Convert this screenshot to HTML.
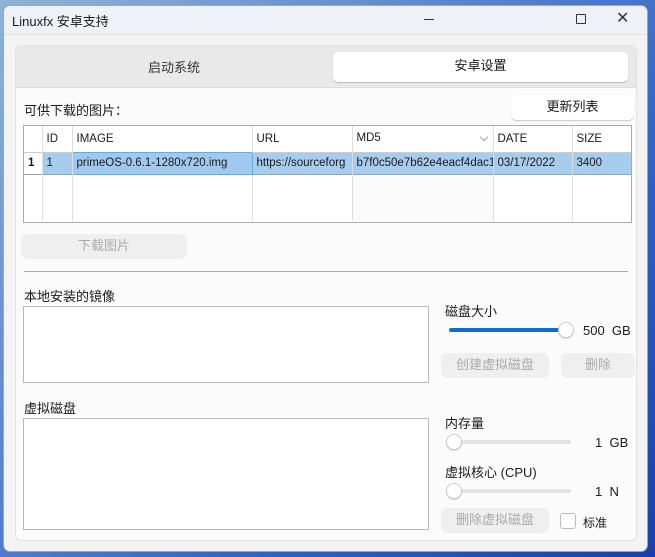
<!DOCTYPE html>
<html><head><meta charset="utf-8"><style>
*{box-sizing:border-box;margin:0;padding:0}
body{width:655px;height:557px;overflow:hidden;background:linear-gradient(135deg,#8fb3d6,#2d5fc4 70%,#1a3fa8);font-family:"Liberation Sans","Noto Sans CJK SC",sans-serif;font-size:12px;color:#1a1a1a;position:relative}
.a{position:absolute}
.win{left:3px;top:5px;width:645px;height:547px;background:#f3f3f3;border:1px solid #9aa8b8;border-radius:7px;overflow:hidden}
.tb{left:0;top:0;width:100%;height:29px;background:#eef2f7;border-bottom:1px solid #dfe3e8}
.panel{left:11px;top:39px;width:622px;height:496px;background:#fbfbfb;border:1px solid #e2e2e2;border-radius:6px;overflow:hidden}
.tabs{left:0;top:0;width:100%;height:42px;background:#e9e9e9;border-bottom:1px solid #ddd}
.btn{background:#fff;border-radius:5px;box-shadow:0 1px 1px rgba(0,0,0,.2);text-align:center}
.dis{background:#efefef;border-radius:6px;color:#aaa;text-align:center}
.box{background:#fff;border:1px solid #b8b8b8}
.track{height:4px;background:#e3e3e3;border-radius:2px}
.thumb{width:16px;height:16px;border-radius:50%;background:#fff;border:1px solid #ccc;box-shadow:0 1px 1px rgba(0,0,0,.15)}
td{border-right:1px solid #ddd;padding:0 4px;white-space:nowrap;overflow:hidden;font-size:11.5px}
table{border-collapse:collapse;table-layout:fixed}
.lb{font-size:13px;line-height:16px}
</style></head><body>
<div class="a win">
 <div class="a tb"></div>
 <div class="a" style="left:8px;top:5px;font-size:13px">Linuxfx 安卓支持</div>
 <div class="a" style="left:420px;top:13px;width:10px;height:1px;background:#333"></div>
 <div class="a" style="left:572px;top:8px;width:10px;height:10px;border:1px solid #333;border-radius:1px"></div>
 <div class="a" style="left:612px;top:2px;font-size:16px;color:#333">✕</div>
 <div class="a panel">
  <div class="a tabs"></div>
  <div class="a" style="left:132px;top:11px;font-size:13px;color:#333">启动系统</div>
  <div class="a btn" style="left:317px;top:6px;width:295px;height:30px;line-height:28px;font-size:13px">安卓设置</div>
  <div class="a" style="left:0;top:-7px;width:622px;height:500px">
  <div class="a lb" style="left:8px;top:64px">可供下载的图片：</div>
  <div class="a btn" style="left:495px;top:56px;width:123px;height:25px;line-height:23px;font-size:13px">更新列表</div>
  <div class="a box" style="left:7px;top:86px;width:609px;height:98px;border-color:#aaa">
   <table style="width:607px">
    <colgroup><col style="width:18px"><col style="width:30px"><col style="width:180px"><col style="width:100px"><col style="width:141px"><col style="width:79px"><col style="width:59px"></colgroup>
    <tr style="height:26px;border-bottom:1px solid #ccc"><td></td><td>ID</td><td>IMAGE</td><td>URL</td><td>MD5<span style="float:right;color:#555">⌵</span></td><td>DATE</td><td style="border:none">SIZE</td></tr>
    <tr style="height:22px;background:#a7cdee;border-bottom:1px solid #8ab"><td style="background:#fff;font-weight:bold">1</td><td>1</td><td style="border:1px solid #6aa8e0;background:#9fc9ee">primeOS-0.6.1-1280x720.img</td><td>https://sourceforg</td><td>b7f0c50e7b62e4eacf4dac1</td><td>03/17/2022</td><td style="border:none">3400</td></tr>
    <tr style="height:47px"><td></td><td></td><td></td><td></td><td style="background:#fafafa"></td><td></td><td style="border:none"></td></tr>
   </table>
  </div>
  <div class="a dis" style="left:5px;top:195px;width:166px;height:25px;line-height:23px;font-size:13px">下载图片</div>
  <div class="a" style="left:8px;top:232px;width:604px;height:1px;background:#aaa"></div>
  <div class="a lb" style="left:8px;top:250px">本地安装的镜像</div>
  <div class="a box" style="left:7px;top:267px;width:406px;height:77px"></div>
  <div class="a lb" style="left:8px;top:362px">虚拟磁盘</div>
  <div class="a box" style="left:7px;top:379px;width:406px;height:112px"></div>
  <div class="a lb" style="left:429px;top:265px">磁盘大小</div>
  <div class="a track" style="left:433px;top:289px;width:118px;background:#0a6fd1"></div>
  <div class="a thumb" style="left:542px;top:283px"></div>
  <div class="a lb" style="left:567px;top:284px">500&nbsp; GB</div>
  <div class="a dis" style="left:425px;top:314px;width:108px;height:25px;line-height:23px;font-size:13px">创建虚拟磁盘</div>
  <div class="a dis" style="left:545px;top:314px;width:74px;height:25px;line-height:23px;font-size:13px">删除</div>
  <div class="a lb" style="left:429px;top:377px">内存量</div>
  <div class="a track" style="left:433px;top:401px;width:122px"></div>
  <div class="a thumb" style="left:430px;top:395px"></div>
  <div class="a lb" style="left:579px;top:396px">1&nbsp; GB</div>
  <div class="a lb" style="left:429px;top:426px">虚拟核心 (CPU)</div>
  <div class="a track" style="left:433px;top:450px;width:122px"></div>
  <div class="a thumb" style="left:430px;top:444px"></div>
  <div class="a lb" style="left:579px;top:445px">1&nbsp; N</div>
  <div class="a dis" style="left:425px;top:469px;width:108px;height:25px;line-height:23px;font-size:13px">删除虚拟磁盘</div>
  <div class="a" style="left:544px;top:474px;width:16px;height:16px;border:1px solid #bbb;border-radius:3px;background:#fff"></div>
  <div class="a" style="left:567px;top:475px;font-size:12px">标准</div>
  </div>
 </div>
</div>
</body></html>
